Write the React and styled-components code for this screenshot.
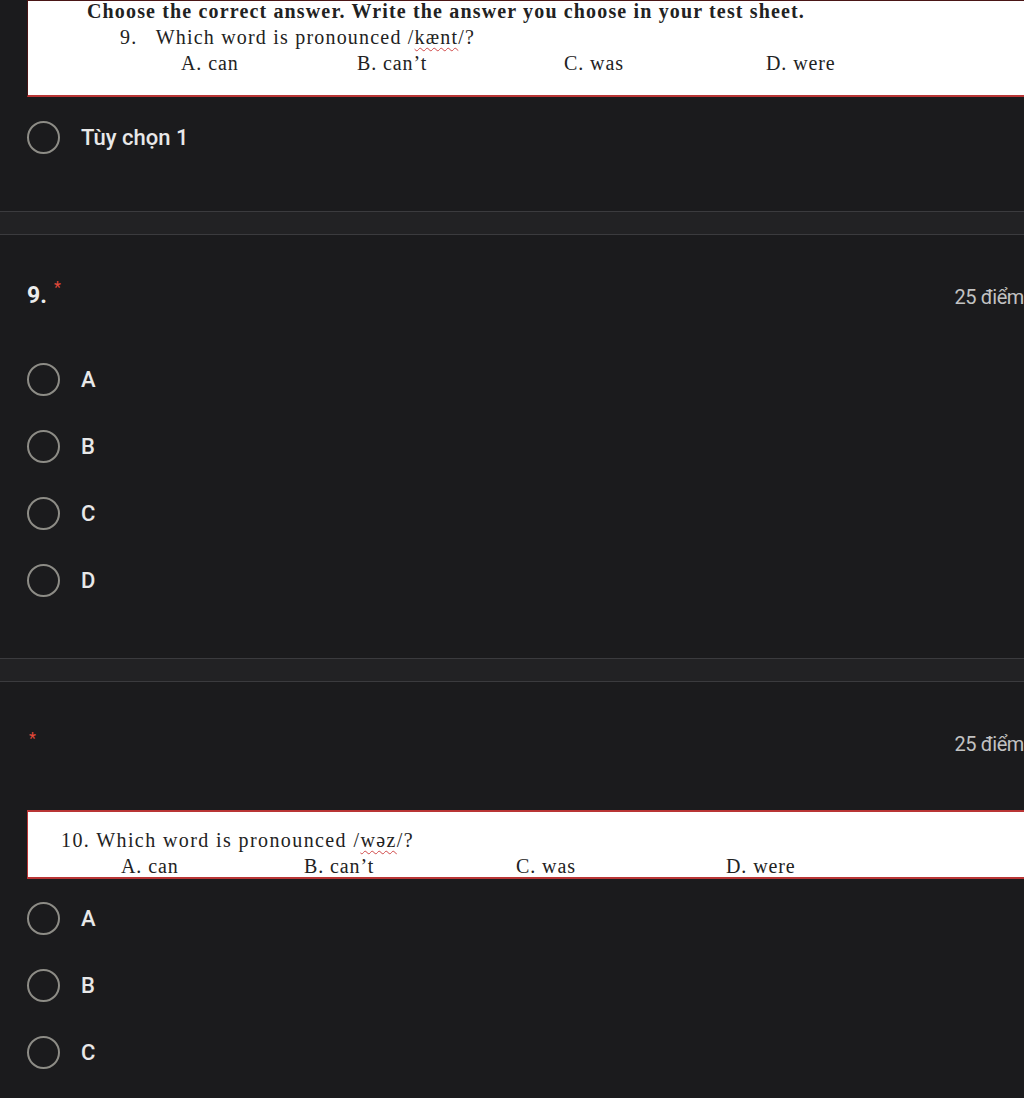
import styled, { createGlobalStyle } from "styled-components";

const GlobalStyle = createGlobalStyle`
  html, body {
    margin: 0;
    padding: 0;
    background: #1b1b1d;
    overflow: hidden;
  }
`;

const Page = styled.div`
  width: 1024px;
  min-height: 1098px;
  background: #1b1b1d;
  font-family: Roboto, "Noto Sans", sans-serif;
  color: #e6e6e6;
`;

const Section = styled.section`
  padding: ${(p) => p.$pad || "0"};
  padding-left: 27px;
`;

const Divider = styled.div`
  height: 22px;
  background: #222224;
  border-top: 1px solid #3b3b3e;
  border-bottom: 1px solid #3b3b3e;
`;

const Sheet = styled.div`
  background: #ffffff;
  color: #222;
  font-family: "Liberation Serif", "Times New Roman", serif;
  font-size: 20px;
  letter-spacing: 0.9px;
  line-height: 26px;
  border: 1px solid #4a1616;
  border-right: none;
  border-bottom: 2px solid #b93535;
  ${(p) => p.$top && "border-top: 2px solid #b93535; border-left: 1px solid #b93535;"}
  box-sizing: border-box;
  height: ${(p) => p.$h}px;
  padding: ${(p) => p.$pad};
`;

const Heading = styled.div`
  font-weight: bold;
  letter-spacing: 1.15px;
  padding-left: ${(p) => p.$indent}px;
  margin-top: -3px;
`;

const Line = styled.div`
  padding-left: ${(p) => p.$indent}px;
  white-space: pre;
  letter-spacing: ${(p) => p.$ls || 1.2}px;
`;

const Ipa = styled.span`
  text-decoration: underline wavy #d04848;
  text-decoration-thickness: 1px;
  text-underline-offset: 3px;
`;

const Choices = styled.div`
  display: flex;
  padding-left: ${(p) => p.$indent}px;
  line-height: 26px;
`;

const Choice = styled.span`
  width: ${(p) => p.$w}px;
  flex: none;
`;

const Option = styled.label`
  display: flex;
  align-items: center;
  height: 67px;
  gap: 21px;
  font-size: 22px;
  font-weight: 500;
  color: #e8e8e8;
  margin-top: ${(p) => p.$mt || 0}px;
`;

const Radio = styled.span`
  width: 29px;
  height: 29px;
  border: 2.5px solid #8d8c86;
  border-radius: 50%;
  flex: none;
`;

const Header = styled.div`
  display: flex;
  align-items: center;
  justify-content: space-between;
  height: 40px;
  margin-bottom: ${(p) => p.$mb}px;
`;

const Title = styled.div`
  display: flex;
  align-items: flex-start;
  gap: 7px;
  font-size: 23px;
  font-weight: 700;
  color: #ececec;
  padding-left: ${(p) => p.$pl || 0}px;
`;

const Star = styled.span`
  color: #e5493a;
  font-size: 16px;
  font-weight: 400;
  line-height: 1;
  margin-top: ${(p) => p.$mt || 0}px;
`;

const Points = styled.div`
  font-size: 20px;
  color: #c2c2c2;
  margin-top: 4px;
  letter-spacing: -0.4px;
`;

function RadioOption({ label, mt }) {
  return (
    <Option $mt={mt}>
      <Radio />
      {label}
    </Option>
  );
}

export default function App() {
  return (
    <Page>
      <GlobalStyle />
      <Section $pad="0 0 40px">
        <Sheet $h={97} $pad="0 0 0 59px">
          <Heading $indent={0}>
            Choose the correct answer. Write the answer you choose in your test sheet.
          </Heading>
          <Line $indent={33}>
            9.   Which word is pronounced /<Ipa>kænt</Ipa>/?
          </Line>
          <Choices $indent={94}>
            <Choice $w={176}>A. can</Choice>
            <Choice $w={207}>B. can’t</Choice>
            <Choice $w={202}>C. was</Choice>
            <Choice $w={120}>D. were</Choice>
          </Choices>
        </Sheet>
        <RadioOption label="Tùy chọn 1" mt={7} />
      </Section>

      <Divider />

      <Section $pad="40px 0 44px">
        <Header $mb={31}>
          <Title>
            9.
            <Star $mt={-2}>*</Star>
          </Title>
          <Points>25 điểm</Points>
        </Header>
        <RadioOption label="A" />
        <RadioOption label="B" />
        <RadioOption label="C" />
        <RadioOption label="D" />
      </Section>

      <Divider />

      <Section $pad="40px 0 0">
        <Header $mb={48}>
          <Title $pl={2}>
            <Star $mt={-6}>*</Star>
          </Title>
          <Points>25 điểm</Points>
        </Header>
        <Sheet $top $h={69} $pad="15px 0 0 33px">
          <Line $indent={0} $ls={1.4}>
            10. Which word is pronounced /<Ipa>wəz</Ipa>/?
          </Line>
          <Choices $indent={60}>
            <Choice $w={183}>A. can</Choice>
            <Choice $w={212}>B. can’t</Choice>
            <Choice $w={210}>C. was</Choice>
            <Choice $w={120}>D. were</Choice>
          </Choices>
        </Sheet>
        <RadioOption label="A" mt={6} />
        <RadioOption label="B" />
        <RadioOption label="C" />
      </Section>
    </Page>
  );
}
